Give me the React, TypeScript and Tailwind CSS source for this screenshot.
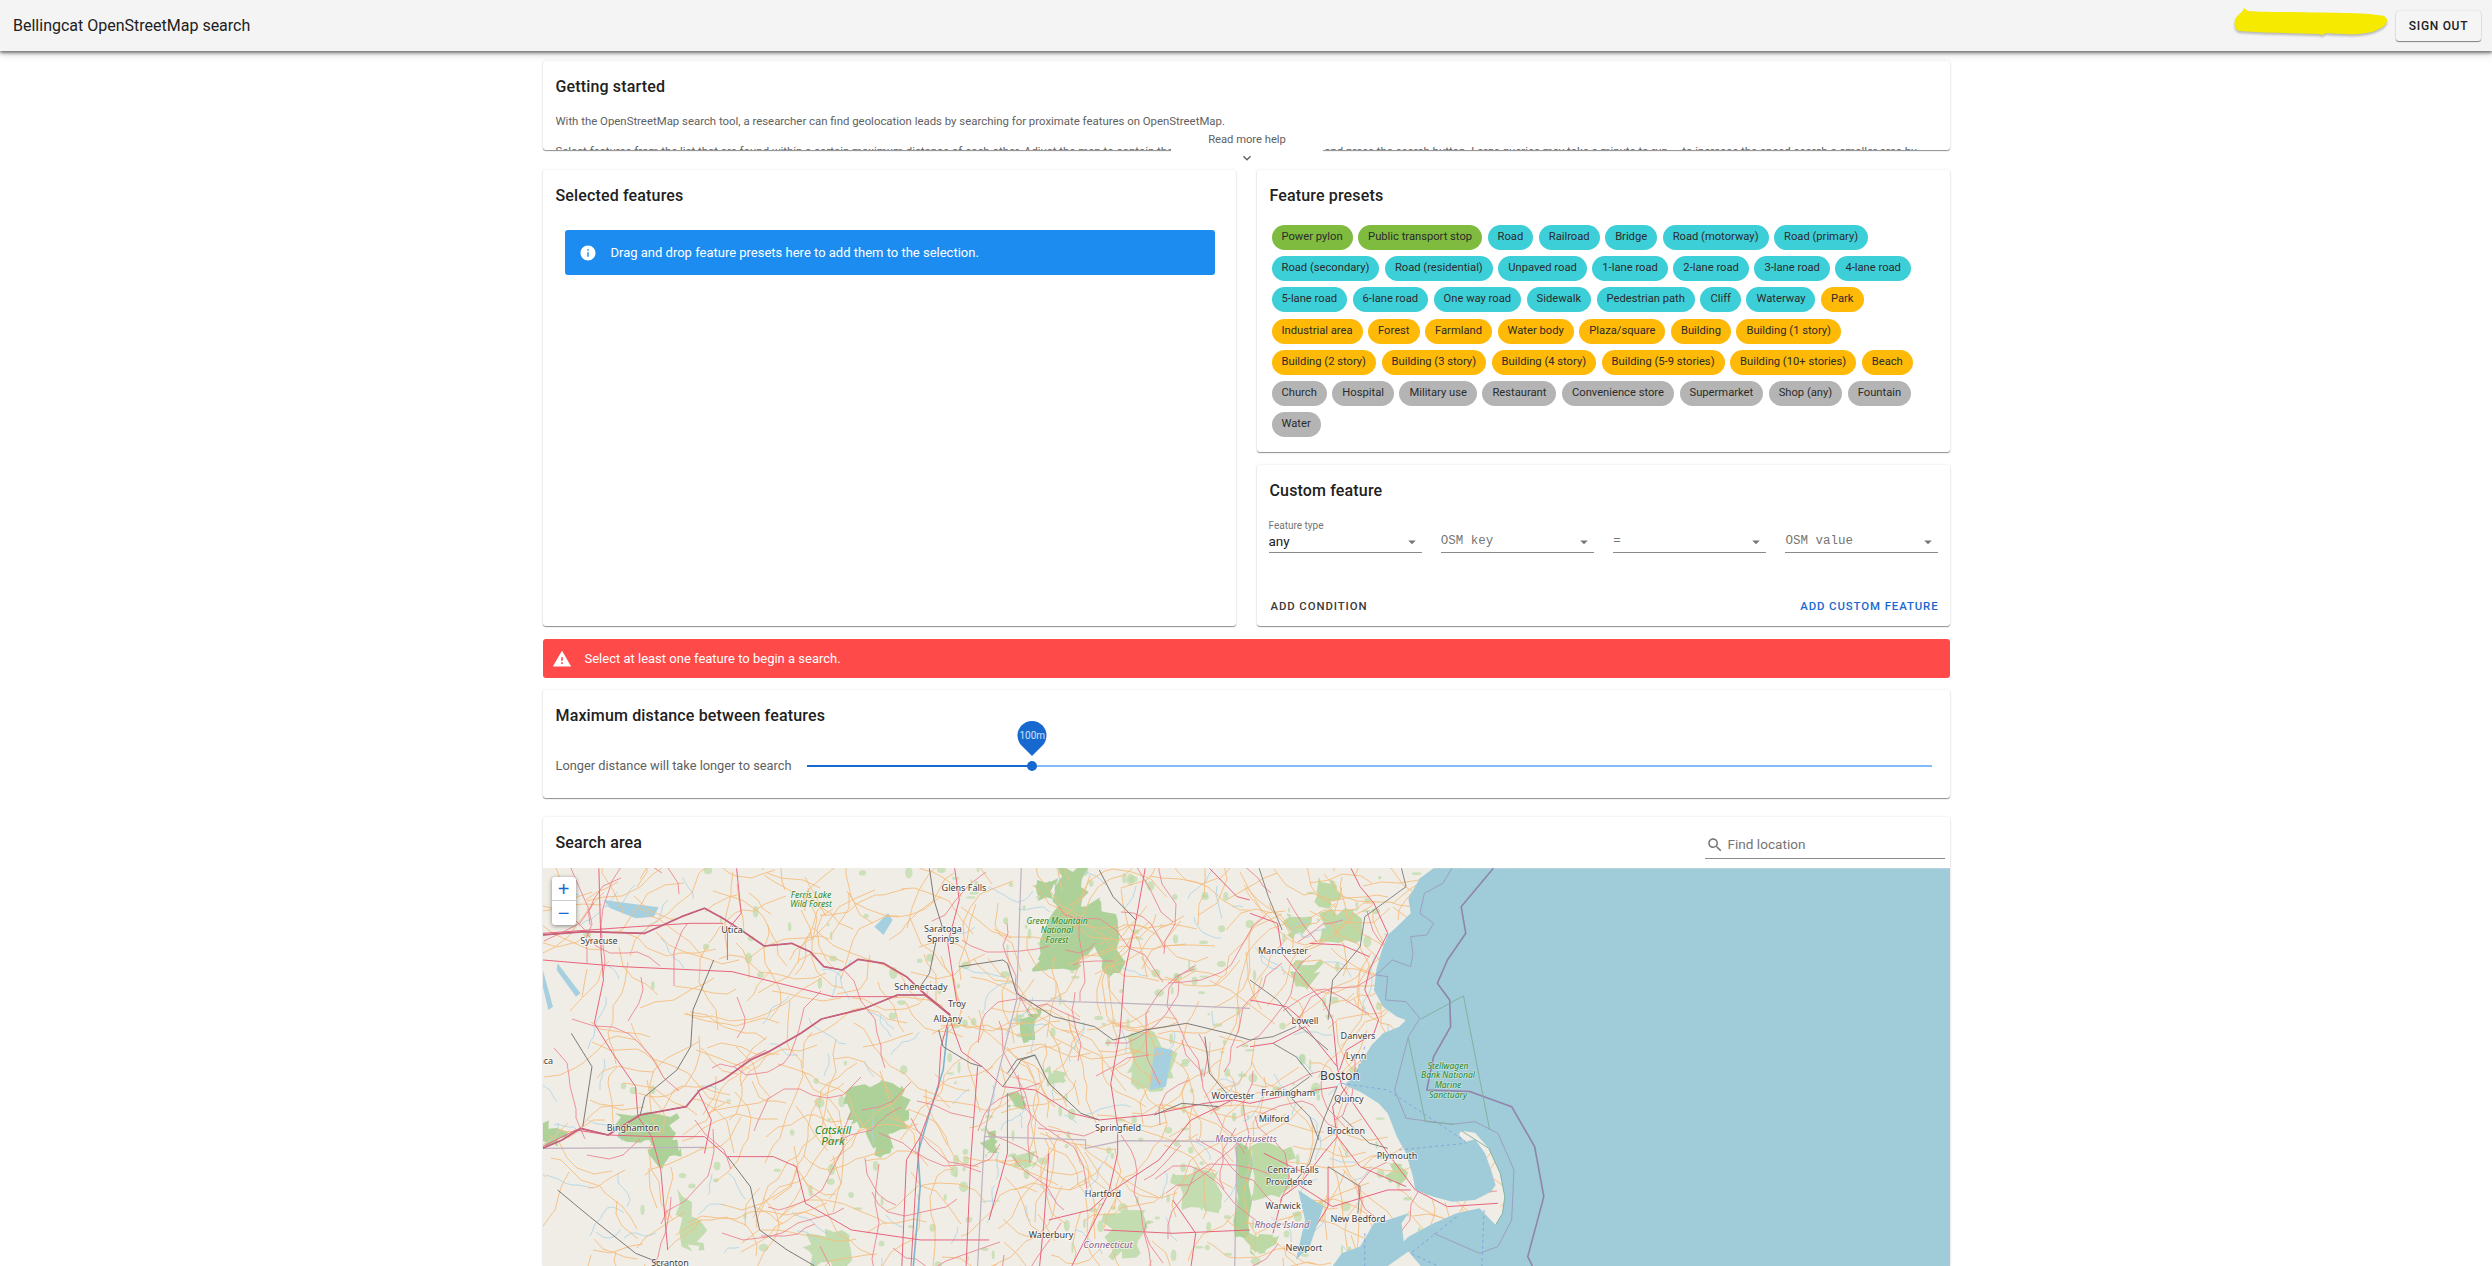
import React from 'react';

const ROBOTO = 'font-[Roboto,sans-serif]';
const CARD = 'bg-white rounded-[3px] shadow-[0_1px_1px_rgba(0,0,0,0.42),0_0_3px_rgba(0,0,0,0.1)]';

const presets: { color: string; items: string[] }[] = [
  { color: 'bg-[#7fbb3f]', items: ['Power pylon', 'Public transport stop'] },
  {
    color: 'bg-[#3dcfd8]',
    items: ['Road', 'Railroad', 'Bridge', 'Road (motorway)', 'Road (primary)', 'Road (secondary)', 'Road (residential)', 'Unpaved road', '1-lane road', '2-lane road', '3-lane road', '4-lane road', '5-lane road', '6-lane road', 'One way road', 'Sidewalk', 'Pedestrian path', 'Cliff', 'Waterway'],
  },
  {
    color: 'bg-[#ffb907]',
    items: ['Park', 'Industrial area', 'Forest', 'Farmland', 'Water body', 'Plaza/square', 'Building', 'Building (1 story)', 'Building (2 story)', 'Building (3 story)', 'Building (4 story)', 'Building (5-9 stories)', 'Building (10+ stories)', 'Beach'],
  },
  {
    color: 'bg-[#b4b4b4]',
    items: ['Church', 'Hospital', 'Military use', 'Restaurant', 'Convenience store', 'Supermarket', 'Shop (any)', 'Fountain', 'Water'],
  },
];

const Caret = () => (
  <svg viewBox="0 0 24 24" className="w-[18px] h-[18px] fill-[#757575] shrink-0">
    <path d="M7 10l5 5 5-5z" />
  </svg>
);

const SelectField = ({ label, value, mono, dark }: { label?: string; value: string; mono?: boolean; dark?: boolean }) => (
  <div className="w-[153px] relative">
    {label && <div className="absolute -top-[7px] left-0 text-[10px] leading-[12px] text-[#757575]">{label}</div>}
    <div className="h-[26px] pt-[4px] flex items-center justify-between border-b border-[#8a8a8a] pr-[1px]">
      <span className={mono ? "font-['Liberation_Mono',monospace] text-[12.5px] text-[#757575]" : `text-[13.5px] ${dark ? 'text-[#212121]' : 'text-[#757575]'}`}>{value}</span>
      <Caret />
    </div>
  </div>
);

// small seeded generator so that the minor map roads stay the same on every load
const rng = (seed: number) => () => {
  seed = (seed + 0x6d2b79f5) | 0;
  let t = Math.imul(seed ^ (seed >>> 15), 1 | seed);
  t = (t + Math.imul(t ^ (t >>> 7), 61 | t)) ^ t;
  return ((t ^ (t >>> 14)) >>> 0) / 4294967296;
};

const walk = (r: () => number, count: number, xMax: number, len: number) => {
  const out: string[] = [];
  for (let i = 0; i < count; i++) {
    let x = r() * xMax;
    let y = r() * 398;
    let a = r() * Math.PI * 2;
    const pts = [`${x.toFixed(0)},${y.toFixed(0)}`];
    const n = 3 + Math.floor(r() * 6);
    for (let j = 0; j < n; j++) {
      a += (r() - 0.5) * 1.3;
      const l = len * (0.5 + r());
      x += Math.cos(a) * l;
      y += Math.sin(a) * l;
      pts.push(`${x.toFixed(0)},${y.toFixed(0)}`);
    }
    out.push(pts.join(' '));
  }
  return out;
};

const r1 = rng(11);
const minorOrange = walk(r1, 430, 960, 15);
const minorPink = walk(r1, 95, 950, 17);
const streams = walk(r1, 110, 900, 6);
const blobs = Array.from({ length: 320 }, () => ({
  x: Math.sqrt(r1()) * 900,
  y: r1() * 398,
  rx: 1 + r1() * 4,
  ry: 1 + r1() * 5,
}));

// breaks up the straight edges of a traced polygon
const rough = (points: string, amount: number) => {
  const p = points.split(' ').map(s => s.split(',').map(Number));
  const out: string[] = [];
  p.forEach((a, i) => {
    const b = p[(i + 1) % p.length];
    for (let k = 0; k < 5; k++) {
      const t = k / 5;
      const jx = k === 0 ? 0 : (r1() - 0.5) * amount;
      const jy = k === 0 ? 0 : (r1() - 0.5) * amount;
      out.push(`${(a[0] + (b[0] - a[0]) * t + jx).toFixed(0)},${(a[1] + (b[1] - a[1]) * t + jy).toFixed(0)}`);
    }
  });
  return out.join(' ');
};

const Z6 = 'translate(-13,-48) scale(0.4591,0.3333)';
const Z7 = 'translate(707,-48) scale(0.4591,0.3333)';

const forestsZ6 = [
  '700,800 790,790 830,840 825,900 790,940 785,1000 750,1005 735,925 690,900',
  '1150,145 1215,145 1200,260 1240,240 1280,300 1285,460 1260,465 1230,380 1190,450 1095,455 1110,380 1150,260',
  '185,880 320,880 310,960 330,1010 280,1040 260,960 190,950',
  '1080,570 1115,570 1100,660 1075,670',
  '28,910 85,930 60,980 28,975',
  '1535,980 1568,980 1568,1250 1535,1250',
  '990,920 1015,950 1010,1000 990,1005',
  '1040,820 1080,830 1075,870 1045,865',
  '1105,180 1150,175 1140,240 1110,230',
].map(p => rough(p, 26));

const paleZ6 = [
  '1300,650 1350,630 1410,700 1380,810 1330,815 1300,760',
  '600,1240 680,1230 690,1338 610,1338',
  '1400,1060 1500,1050 1500,1180 1420,1170',
  '1250,1180 1340,1170 1330,1300 1260,1310',
  '1050,1000 1100,1000 1090,1050 1050,1040',
  '1120,750 1170,745 1160,790 1125,785',
  '320,1100 370,1200 380,1290 330,1280',
].map(p => rough(p, 30));

const forestsZ7 = [
  '150,170 190,190 200,230 150,260',
  '80,280 135,290 110,350 80,345',
  '150,280 240,260 230,370 150,370',
  '0,980 90,980 70,1120 0,1140',
  '0,1240 60,1250 30,1300 0,1300',
  '305,1030 335,1040 325,1100 305,1090',
  '100,420 160,430 130,520 100,500',
].map(p => rough(p, 30));

const lakesZ6 = [
  '160,240 280,262 270,290 230,295 175,265',
  '780,280 790,300 770,345 750,320',
  '1360,680 1400,690 1385,800 1350,810',
  '28,450 50,560 40,570 28,500',
  '60,430 110,520 100,530 58,450',
];

const majorZ6 = [
  '28,345 120,335 250,340 330,290 380,265 420,295 470,340 510,378 570,370 610,395 640,440 680,450 715,418 770,430 820,470 850,510 915,585',
  '915,585 860,525 800,525 730,565 635,597 590,640 520,695 480,720 420,780 370,810 340,860 240,885 170,945 110,925 70,960 28,985',
  '1040,430 1060,520 1140,590 1230,620 1270,660 1300,650 1340,630 1430,610 1520,640 1568,660',
  '400,420 355,570 350,680 320,750 250,830 240,885',
  '1100,705 1130,790 1200,880 1240,900',
  '890,630 900,680 960,730 985,740',
  '430,1010 480,1100 500,1230 560,1290 620,1338',
  '60,1110 130,1190 230,1300 300,1338',
  '935,440 1030,420 1040,430',
  '885,360 870,460 850,500',
  '115,920 135,740 90,640',
  '870,145 880,240 900,330',
  '1240,150 1270,230 1320,300',
  '1470,650 1480,760 1530,840',
  '1360,885 1420,850 1500,860',
  '1030,800 1070,720 1100,705 1060,720 1040,760',
];

const pinkZ6 = [
  '150,145 155,400 160,480 140,610 180,700 230,800 235,890 265,950 285,1050 300,1290',
  '915,585 895,680 890,800 850,950 840,1100 830,1338',
  '915,600 940,695 985,740 1030,800 1100,810 1180,880 1240,900 1350,885 1470,850 1530,840 1568,850',
  '1340,145 1320,300 1295,460 1285,640 1265,790 1280,920 1280,1000 1260,1120 1220,1230 1180,1338',
  '28,980 100,930 170,945 270,950 380,950 430,1010 530,1010 580,1040 600,1150 650,1190 700,1230 850,1260 1000,1260',
  '450,145 460,280 430,330 430,420',
  '28,420 200,440 440,455 660,530 800,530',
  '28,340 130,330 230,320 350,310 420,310',
  '925,145 935,240 910,370 930,550',
  '1480,145 1540,230 1568,240',
  '1260,1120 1370,1020 1440,900 1530,840',
  '1130,1200 1220,1170 1260,1120',
  '810,1338 820,1020 850,950',
  '975,740 960,1020 950,1338',
  '1130,1000 1120,1200 1110,1338',
  '1400,1140 1450,1240 1440,1338',
  '1250,1230 1400,1240 1568,1230',
  '1040,820 1040,1000 1000,1200',
  '365,810 395,900 380,1000',
];

const bordersZ6 = [
  '1070,145 1060,540 1000,870 990,950 975,1338',
  '1065,540 1300,550 1568,565',
  '28,985 380,982',
  '990,950 1210,960 1210,985 1290,962 1540,965 1535,1338',
];

const pinkZ7 = [
  '0,280 60,310 70,400 130,500 160,545 180,600 190,740 200,800',
  '0,680 50,670 120,620 190,740',
  '300,340 260,450 250,510 280,600 270,640 210,690 195,750',
  '210,800 180,860 190,950 160,1000 110,1090 70,1130 50,1240',
  '200,800 300,1000 360,1110 430,1160 540,1150',
  '100,1090 180,1160 300,1110 350,1110',
  '130,370 200,375 260,410',
  '0,850 100,820 190,800',
  '220,145 240,200 270,250 300,340',
  '190,950 240,1040 340,1100',
  '30,1000 60,1020 120,1060',
  '170,1040 170,1160 120,1270',
  '0,540 80,560 130,620',
];

const greyZ7 = [
  '330,145 340,200 250,290 240,380 180,480 170,600',
  '100,620 50,650 0,660',
  '130,770 80,820 130,890 150,960',
  '50,670 100,710 135,770',
  '20,145 40,230 70,330',
  '0,480 60,540 110,620 170,690',
  '190,800 160,900 130,1030 90,1100',
  '170,1040 240,1100 235,1180',
  '200,890 260,970 300,985',
];

const coastSea =
  '400,145 370,175 345,235 350,280 320,320 300,345 285,400 275,450 270,510 290,560 320,590 340,600 325,620 290,640 265,675 245,720 225,770 205,795 240,815 280,850 300,880 320,950 340,1000 355,1070 360,1110 400,1130 440,1145 490,1140 525,1115 535,1095 525,1050 512,1000 490,958 470,965 455,945 460,932 490,938 520,985 545,1060 555,1130 550,1180 535,1215 500,1165 450,1180 400,1210 345,1250 335,1265 330,1210 345,1180 300,1200 270,1210 240,1280 200,1300 180,1338 1530,1338 1530,145';

const places: [string, number, number, number?][] = [
  ['Glens Falls', 421, 20], ['Syracuse', 56, 73], ['Utica', 189, 62], ['Saratoga', 400, 61], ['Springs', 400, 71],
  ['Schenectady', 378, 119], ['Troy', 414, 136], ['Albany', 405, 151], ['Worcester', 690, 228], ['Binghamton', 90, 260],
  ['Springfield', 575, 260], ['Hartford', 560, 326], ['Waterbury', 508, 367], ['Scranton', 127, 395], ['Manchester', 740, 83],
  ['Lowell', 762, 153], ['Danvers', 815, 168], ['Lynn', 813, 188], ['Boston', 797, 209, 12], ['Framingham', 745, 225],
  ['Quincy', 806, 231], ['Milford', 731, 251], ['Brockton', 803, 263], ['Plymouth', 854, 288], ['Central Falls', 750, 302],
  ['Providence', 746, 314], ['Warwick', 740, 338], ['New Bedford', 815, 351], ['Newport', 761, 380], ['Ithaca', -3, 193],
];

const parks: [string, number, number, number?][] = [
  ['Ferris Lake', 268, 27], ['Wild Forest', 268, 36], ['Green Mountain', 514, 53], ['National', 514, 62], ['Forest', 514, 72],
  ['Catskill', 290, 263, 11.5], ['Park', 290, 274, 11.5], ['Stellwagen', 905, 198], ['Bank National', 905, 207], ['Marine', 905, 217], ['Sanctuary', 905, 227],
];

const regions: [string, number, number][] = [['Massachusetts', 703, 271], ['Connecticut', 565, 377], ['Rhode Island', 739, 357]];

const lines = (list: string[], transform: string, stroke: string, width: number) => (
  <g transform={transform} fill="none" stroke={stroke} strokeWidth={width} strokeLinejoin="round">
    {list.map((p, i) => (
      <polyline key={i} points={p} vectorEffect="non-scaling-stroke" />
    ))}
  </g>
);

const OsmMap = () => (
  <svg viewBox="0 0 1407 398" preserveAspectRatio="xMinYMin slice" className="block w-full h-full">
    <rect width="1407" height="398" fill="#f0ede7" />
    {blobs.map((b, i) => (
      <ellipse key={i} cx={b.x} cy={b.y} rx={b.rx} ry={b.ry} fill="#bcdaa6" opacity="0.7" />
    ))}
    <g transform={Z6} fill="#c3ddb0">
      {paleZ6.map((p, i) => <polygon key={i} points={p} />)}
    </g>
    <g transform={Z6} fill="#aed19a">
      {forestsZ6.map((p, i) => <polygon key={i} points={p} />)}
    </g>
    <g transform={Z7} fill="#bcd9a6">
      {forestsZ7.map((p, i) => <polygon key={i} points={p} />)}
    </g>
    <g transform={Z6} fill="#a6d0df">
      {lakesZ6.map((p, i) => <polygon key={i} points={p} />)}
    </g>
    {lines(streams, 'translate(0,0)', '#a9d3e5', 0.8)}
    {lines(minorOrange, 'translate(0,0)', '#f5bd7e', 0.9)}
    {lines(minorPink, 'translate(0,0)', '#ec8790', 0.9)}
    {lines(bordersZ6, Z6, '#bfb1c0', 1.2)}
    {lines(['910,620 900,750 870,880 845,1000 850,1100 835,1338'], Z6, '#7fb4cc', 1.6)}
    {lines(pinkZ6, Z6, '#e8647c', 1)}
    {lines(majorZ6, Z6, '#7d7a78', 1)}
    {lines(majorZ6.slice(0, 2), Z6, '#c9607c', 1.7)}
    {lines(pinkZ7, Z7, '#e8647c', 1)}
    {lines(greyZ7, Z7, '#7d7a78', 0.9)}
    <polygon transform={Z7} points={coastSea} fill="#a0cbd8" />
    <polygon transform={Z7} points="105,1110 160,1160 130,1280 100,1320 120,1200" fill="#a0cbd8" />
    <polygon transform={Z7} points="300,1338 345,1295 372,1338" fill="#f0ede7" />
    {lines(['530,145 460,260 470,340 430,420 408,490 435,540 437,620 400,710 385,810 480,815 570,860 620,980 640,1130 605,1310 615,1338'], Z7, '#9184ab', 1.6)}
    {lines(['440,145 420,190 380,220 370,280 400,310 385,345 350,350 355,400 350,440 310,420 275,465 300,470 295,540 340,545 370,595 345,650 315,810 340,895 440,913 490,905 540,940 575,1050 570,1200 540,1280 500,1300 400,1240'], Z7, '#9a94bb', 0.8)}
    {lines(['372,597 465,528 522,930', '345,655 382,905 445,913', '460,932 520,985 545,1060 555,1130 550,1180 535,1215'], Z7, '#7fae9a', 0.9)}
    <g transform={Z7} fill="none" stroke="#7f9be0" strokeWidth="0.8" strokeDasharray="3 3">
      {['325,990 470,970', '200,790 300,810 470,965', '250,680 230,770', '450,1190 350,1300 410,1338', '510,1170 505,1338', '250,1240 250,1338'].map((p, i) => (
        <polyline key={i} points={p} vectorEffect="non-scaling-stroke" />
      ))}
    </g>
    <g className="font-['Noto_Sans',sans-serif]" textAnchor="middle" paintOrder="stroke" stroke="#fff" strokeWidth="1.6" strokeOpacity="0.75">
      {places.map(([t, x, y, s]) => (
        <text key={t} x={x} y={y + 3} fontSize={s ?? 9} fill="#3c3c3c">{t}</text>
      ))}
      {parks.map(([t, x, y, s]) => (
        <text key={t} x={x} y={y + 3} fontSize={s ?? 8.5} fontStyle="italic" fill="#1f8a1f" strokeOpacity="0.35">{t}</text>
      ))}
      {regions.map(([t, x, y]) => (
        <text key={t} x={x} y={y + 3} fontSize="9.5" fontStyle="italic" fill="#85608a">{t}</text>
      ))}
    </g>
  </svg>
);

export default function App() {
  return (
    <div className={`${ROBOTO} h-screen overflow-hidden bg-white flex flex-col text-[#212121]`}>
      {/* App bar */}
      <header className="relative z-10 h-[51px] shrink-0 bg-[#f4f4f4] flex items-center justify-between pl-[13px] pr-[11px] shadow-[0_2px_3px_rgba(0,0,0,0.5),0_4px_8px_rgba(0,0,0,0.12)]">
        <div className="text-[16px]">Bellingcat OpenStreetMap search</div>
        <div className="flex items-center gap-[8px]">
          <svg width="154" height="30" viewBox="0 0 154 30" className="block -mt-[6px] drop-shadow-[0_2px_1px_rgba(0,0,0,0.25)]">
            <path d="M10 0C9 5 3 6 1 12C0 18 1 21 5 23C30 25 60 25 85 26C90 28 88 27 92 25C115 27 135 27 145 21C154 17 155 11 150 8C130 4 90 5 60 4C40 4 22 4 14 3Z" fill="#f5ea00" />
          </svg>
          <button className="h-[30px] w-[85px] rounded-[3px] bg-[#f5f5f5] text-[12px] font-medium tracking-[0.7px] shadow-[0_1px_1px_rgba(0,0,0,0.45),0_0_2px_rgba(0,0,0,0.15)]">
            SIGN OUT
          </button>
        </div>
      </header>

      <main className="w-[1407px] mx-auto flex-1 min-h-0 flex flex-col pt-[10px]">
        {/* Getting started */}
        <div className="relative">
          <div className={`${CARD} h-[89px] overflow-hidden px-[13px]`}>
            <h2 className="text-[16px] font-medium leading-[24px] pt-[14px] tracking-[0.15px]">Getting started</h2>
            <div className="mt-[13px] text-[11.4px] leading-[18px] text-[#616161] whitespace-nowrap">
              <p className="mb-[12px]">With the OpenStreetMap search tool, a researcher can find geolocation leads by searching for proximate features on OpenStreetMap.</p>
              <p>Select features from the list that are found within a certain maximum distance of each other. Adjust the map to contain the area that you want to search, and press the search button. Large queries may take a minute to run — to increase the speed search a smaller area by</p>
            </div>
          </div>
          <button className="absolute top-[70px] left-[calc(50%+1px)] -translate-x-1/2 w-[152px] h-[36px] bg-white flex flex-col items-center text-[11.2px] leading-[18px] text-[#616161]">
            Read more help
            <svg viewBox="0 0 24 24" className="w-[16px] h-[16px] fill-[#616161] mt-[1px]">
              <path d="M16.59 8.59L12 13.17 7.41 8.59 6 10l6 6 6-6z" />
            </svg>
          </button>
        </div>

        <div className="grid grid-cols-[693px_693px] gap-x-[21px] mt-[20px]">
          {/* Selected features */}
          <section className={`${CARD} h-[456px] px-[13px]`}>
            <h2 className="text-[16px] font-medium leading-[24px] pt-[14px] tracking-[0.15px]">Selected features</h2>
            <div className="mt-[22px] ml-[9px] mr-[8px] h-[45px] rounded-[3px] bg-[#1c8cf0] flex items-center pl-[14px] text-white text-[13px]">
              <svg viewBox="0 0 24 24" className="w-[18px] h-[18px] fill-white mr-[14px]">
                <path d="M12 2C6.48 2 2 6.48 2 12s4.48 10 10 10 10-4.48 10-10S17.52 2 12 2zm1 15h-2v-6h2v6zm0-8h-2V7h2v2z" />
              </svg>
              Drag and drop feature presets here to add them to the selection.
            </div>
          </section>

          <div className="flex flex-col gap-[13px]">
            {/* Feature presets */}
            <section className={`${CARD} h-[282px] px-[13px]`}>
              <h2 className="text-[16px] font-medium leading-[24px] pt-[14px] tracking-[0.15px]">Feature presets</h2>
              <div className="mt-[17px] pl-[2px] flex flex-wrap gap-x-[5.5px] gap-y-[6.2px]">
                {presets.map(group =>
                  group.items.map(item => (
                    <span key={item} className={`${group.color} h-[25px] rounded-full px-[10px] flex items-center text-[11.2px] text-[#2b2b2b]`}>
                      {item}
                    </span>
                  ))
                )}
              </div>
            </section>

            {/* Custom feature */}
            <section className={`${CARD} h-[161px] flex flex-col pl-[12px] pr-[11px]`}>
              <h2 className="text-[16px] font-medium leading-[24px] pt-[14px] pl-[1px] tracking-[0.15px]">Custom feature</h2>
              <div className="mt-[24px] flex justify-between">
                <SelectField label="Feature type" value="any" dark />
                <SelectField value="OSM key" mono />
                <SelectField value="=" mono />
                <SelectField value="OSM value" mono />
              </div>
              <div className="mt-auto mb-[11px] flex justify-between text-[11.4px] font-medium tracking-[0.9px]">
                <button className="pl-[2px] text-[#3a3a3a]">ADD CONDITION</button>
                <button className="text-[#1769d0]">ADD CUSTOM FEATURE</button>
              </div>
            </section>
          </div>
        </div>

        {/* Warning */}
        <div className="mt-[13px] h-[39px] shrink-0 rounded-[3px] bg-[#ff4a4a] flex items-center pl-[9px] text-white text-[13px]">
          <svg viewBox="0 0 24 24" className="w-[20px] h-[20px] fill-white mr-[13px]">
            <path d="M1 21h22L12 2 1 21zm12-3h-2v-2h2v2zm0-4h-2v-4h2v4z" />
          </svg>
          Select at least one feature to begin a search.
        </div>

        {/* Distance */}
        <section className={`${CARD} mt-[12px] h-[108px] shrink-0 px-[13px]`}>
          <h2 className="text-[16px] font-medium leading-[24px] pt-[14px] tracking-[0.15px]">Maximum distance between features</h2>
          <div className="mt-[28px] flex items-center">
            <div className="w-[251px] text-[12.8px] text-[#616161]">Longer distance will take longer to search</div>
            <div className="relative flex-1 mr-[5px] h-[2px] bg-[#82bcf8]">
              <div className="h-full w-[225px] bg-[#1769d0]" />
              <div className="absolute left-[225px] top-1/2 -translate-x-1/2 -translate-y-1/2 w-[10px] h-[10px] rounded-full bg-[#1769d0]" />
              <div className="absolute left-[225px] -top-[44px] -translate-x-1/2 w-[29px] h-[29px] -rotate-45 rounded-[50%_50%_50%_0] bg-[#1769d0] flex items-center justify-center">
                <span className="rotate-45 text-[10px] text-[#cfe2fb]">100m</span>
              </div>
            </div>
          </div>
        </section>

        {/* Search area */}
        <section className={`${CARD} mt-[19px] flex-1 min-h-0 flex flex-col rounded-b-none overflow-hidden`}>
          <div className="h-[51px] shrink-0 flex items-center justify-between pl-[13px] pr-[5px]">
            <h2 className="text-[16px] font-medium tracking-[0.15px]">Search area</h2>
            <div className="w-[240px] h-[31px] mt-[2px] pt-[3px] flex items-center border-b border-[#8a8a8a] pl-[1px] text-[13.6px] text-[#757575]">
              <svg viewBox="0 0 24 24" className="w-[18px] h-[18px] fill-[#757575] mr-[4px]">
                <path d="M15.5 14h-.79l-.28-.27C15.41 12.59 16 11.11 16 9.5 16 5.91 13.09 3 9.5 3S3 5.91 3 9.5 5.91 16 9.5 16c1.61 0 3.09-.59 4.23-1.57l.27.28v.79l5 4.99L20.49 19l-4.99-5zm-6 0C7.01 14 5 11.99 5 9.5S7.01 5 9.5 5 14 7.01 14 9.5 11.99 14 9.5 14z" />
              </svg>
              Find location
            </div>
          </div>
          <div className="relative flex-1 min-h-0">
            <OsmMap />
            <div className="absolute left-[9px] top-[9px] w-[24px] rounded-[3px] bg-white shadow-[0_1px_4px_rgba(0,0,0,0.45)] text-[#1769d0] text-[20px] leading-[24px] text-center font-['Liberation_Sans',sans-serif]">
              <div className="h-[24px] border-b border-[#ccc]">+</div>
              <div className="h-[24px]">−</div>
            </div>
          </div>
        </section>
      </main>
    </div>
  );
}
